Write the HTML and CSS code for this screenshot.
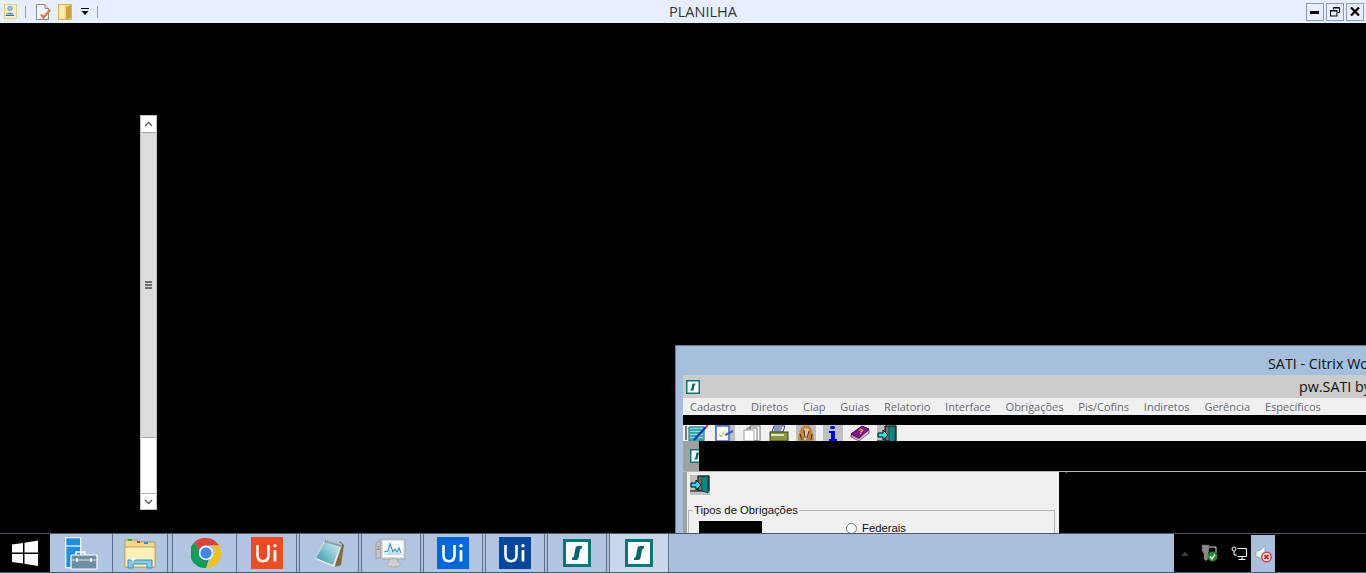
FILE: index.html
```html
<!DOCTYPE html>
<html lang="pt-BR">

<head>
  <meta charset="UTF-8" />
  <meta name="viewport" content="width=device-width, initial-scale=1" />
  <title>PLANILHA</title>
  <link rel="stylesheet" href="styles.css">
</head>

<body>
  <svg class="defs" width="0" height="0">
    <defs>
      <linearGradient id="pad-fill" x1="0" y1="1" x2="1" y2="0">
        <stop offset="0" stop-color="#2f93ad" />
        <stop offset="1" stop-color="#d8f2f4" />
      </linearGradient>
    </defs>
    <symbol id="app-s" viewBox="0 0 28 28">
      <rect x="1.500" y="1.500" width="25" height="25" fill="#fff" stroke="#00787a" stroke-width="3" />
      <path d="M19 7h-4c-1.500 0-2.200.8-2.500 2l-1.500 8c-.2 1-.6 1.500-2 1.800v2.200h4c1.500 0 2.200-.8 2.500-2l1.500-8c.2-1 .6-1.500 2-1.800z" fill="#00686a" />
    </symbol>
    <symbol id="exit-door" viewBox="0 0 20 20">
      <rect width="20" height="20" fill="#c0c0c0" />
      <path d="M8 1h11v15h-11z" fill="#6d6d6d" stroke="#000" />
      <path d="M12 2l6-1v17l-6-2z" fill="#008a8a" stroke="#003c3c" stroke-width=".7" />
      <path d="M1 8h5v-3l5 5-5 5v-3h-5z" fill="#19e6f0" stroke="#000" />
      <path d="M0 16h8" stroke="#000" />
    </symbol>
    <symbol id="ui-mark" viewBox="0 0 32 32">
      <path d="M6.500 8v10c0 4 2.200 6.200 5.500 6.200s5.500-2.200 5.500-6.200v-10" fill="none" stroke="#fff" stroke-width="2.600" />
      <path d="M24 13v11.500" stroke="#fff" stroke-width="2.800" />
      <circle cx="24" cy="8.800" r="1.700" fill="#fff" />
    </symbol>
  </svg>

  <div class="screen">
    <header class="topbar">
      <div class="quick">
        <svg class="quick-user" width="13" height="15" viewBox="0 0 13 15">
          <rect x=".5" y=".5" width="12" height="14" fill="#f7efc0" stroke="#e6cf80" />
          <circle cx="6" cy="4.500" r="2.300" fill="#8fc0ee" stroke="#4b8fd8" stroke-width=".6" />
          <path d="M2 10.500c.5-2.500 7-2.500 8 0z" fill="#4b8fd8" />
          <path d="M2 11.500h8" stroke="#2f6fc0" />
        </svg>
        <span class="quick-sep"></span>
        <svg class="quick-doc" width="15" height="16" viewBox="0 0 15 16">
          <path d="M.5.500h8.500l3.500 4v11h-12z" fill="#f4f4f4" stroke="#8d8d8d" />
          <path d="M9 .5v4h3.500" fill="#ddd" stroke="#8d8d8d" />
          <path d="M5 10.500l2.500 3 6.500-7.500" fill="none" stroke="#e8714e" stroke-width="2.400" />
        </svg>
        <svg class="quick-folder" width="14" height="16" viewBox="0 0 14 16">
          <rect x=".5" y=".5" width="13" height="15" fill="#f5d77c" stroke="#dfb04c" />
          <path d="M8 3l5-2v13l-5 1.500z" fill="#c9a247" />
          <path d="M1.500 1.500h5v13h-5z" fill="#fbeeb6" />
        </svg>
        <svg class="quick-more" width="8" height="7" viewBox="0 0 8 7">
          <path d="M0 .5h8" stroke="#000" />
          <path d="M.5 3h7l-3.500 4z" fill="#000" />
        </svg>
        <span class="quick-sep quick-sep-end"></span>
      </div>
      <div class="topbar-title">PLANILHA</div>
      <div class="winbtns">
        <button class="winbtn" type="button">
          <svg width="10" height="4" viewBox="0 0 10 4"><rect y="1" width="9" height="3" fill="#000" /></svg>
        </button>
        <button class="winbtn" type="button">
          <svg width="10" height="10" viewBox="0 0 10 10" fill="none" stroke="#000"><path d="M3.500 2.500v-2h6v5h-2" /><rect x=".5" y="3.500" width="6.500" height="5.500" /><path d="M1 4h6M4 1h5" /></svg>
        </button>
        <button class="winbtn" type="button">
          <svg width="10" height="9" viewBox="0 0 10 9"><path d="M1 .5l8 8M9 .5l-8 8" stroke="#000" stroke-width="2.200" /></svg>
        </button>
      </div>
    </header>

    <main class="desktop">
      <div class="scrollbar">
        <div class="scroll-btn">
          <svg width="9" height="6" viewBox="0 0 9 6"><path d="M1 5l3.500-3.500 3.500 3.500" fill="none" stroke="#5a5a5a" stroke-width="1.300" /></svg>
        </div>
        <div class="scroll-thumb">
          <span class="grip"></span>
          <span class="grip"></span>
          <span class="grip"></span>
        </div>
        <div class="scroll-track"></div>
        <div class="scroll-btn scroll-btn-down">
          <svg width="9" height="6" viewBox="0 0 9 6"><path d="M1 1l3.500 3.500 3.500-3.500" fill="none" stroke="#5a5a5a" stroke-width="1.300" /></svg>
        </div>
      </div>

      <section class="citrix">
        <div class="citrix-title">SATI - Citrix Workspace</div>
        <div class="app">
          <div class="app-head">
            <svg class="app-icon"><use href="#app-s" /></svg>
            <span class="app-name">pw.SATI by</span>
          </div>
          <nav class="menu">
            <span>Cadastro</span>
            <span>Diretos</span>
            <span>Ciap</span>
            <span>Guias</span>
            <span>Relatorio</span>
            <span>Interface</span>
            <span>Obrigações</span>
            <span>Pis/Cofins</span>
            <span>Indiretos</span>
            <span>Gerência</span>
            <span>Específicos</span>
          </nav>
          <div class="redact-bar"></div>
          <div class="tools">
            <svg class="tool tool-first" viewBox="0 0 23 16">
              <path d="M0 0h23v16h-23z" fill="#f0f0f0" />
              <path d="M4 2h15v14h-15z" fill="#7fe6ee" stroke="#005f66" />
              <path d="M5 5h13M5 8h13M5 11h13M5 14h13" stroke="#005f66" />
              <path d="M9 15l12-13" stroke="#1730b0" stroke-width="2" />
              <path d="M21 2l2-2" stroke="#f03030" stroke-width="2" />
              <path d="M1 15v-14" stroke="#000" />
            </svg>
            <svg class="tool" viewBox="0 0 20 16">
              <rect width="20" height="16" fill="#c0c0c0" />
              <rect x="1" y="1" width="13" height="15" fill="#fff" stroke="#3a66c0" stroke-width="1.500" />
              <path d="M4 9l2 3 4-6" fill="none" stroke="#c9a030" />
              <path d="M10 10l8-4" stroke="#3a66c0" stroke-width="2" />
            </svg>
            <svg class="tool" viewBox="0 0 20 16">
              <rect width="20" height="16" fill="#f0f0f0" />
              <path d="M8 1h10v15h-10zM5 3h10v13h-10z" fill="#fff" stroke="#333" stroke-width=".7" />
              <path d="M2 5h10v11h-10z" fill="#fff" stroke="#777" stroke-width=".7" />
            </svg>
            <svg class="tool" viewBox="0 0 20 16">
              <rect width="20" height="16" fill="#f0f0f0" />
              <path d="M5 1h11l-2 6h-11z" fill="#e8f0ff" stroke="#2a3f8c" />
              <path d="M5 3h8M5 5h7" stroke="#2a3f8c" />
              <rect x="1" y="7" width="18" height="9" fill="#8c9440" stroke="#3f4510" />
              <path d="M2 10h13" stroke="#d7f0b0" stroke-width="2" />
            </svg>
            <svg class="tool" viewBox="0 0 20 16">
              <rect width="20" height="16" fill="#c0c0c0" />
              <path d="M10 0c5 0 7 5 8 16h-16c1-11 3-16 8-16z" fill="#b98a45" />
              <path d="M8 4c2-1 4-1 5 1l-1 7-4 4z" fill="#e7c78f" />
              <path d="M8 5l1 8M13 6l-2 7M4 9l2 6M16 9l-1 6" stroke="#4c2f12" />
            </svg>
            <svg class="tool" viewBox="0 0 20 16">
              <rect width="20" height="16" fill="#c0c0c0" />
              <rect x="7" y="1" width="5" height="3" rx="1.500" fill="#0000f0" />
              <path d="M6 6h6v8h2v2h-8v-2h2v-6h-2z" fill="#0000f0" />
            </svg>
            <svg class="tool" viewBox="0 0 20 16">
              <rect width="20" height="16" fill="#f0f0f0" />
              <path d="M1 9l11-8 7 3-10 9z" fill="#8a0f92" stroke="#4a0050" />
              <path d="M1 10l8 4 10-9v3l-10 8-8-4z" fill="#d8d8d8" stroke="#4a0050" stroke-width=".6" />
              <text class="tool-mark" x="8.500" y="9">?</text>
            </svg>
            <svg class="tool" viewBox="0 0 20 16"><use href="#exit-door" width="20" height="20" /></svg>
          </div>
          <div class="child-head">
            <svg class="child-icon"><use href="#app-s" /></svg>
            <div class="child-redact"></div>
          </div>
          <div class="child-row">
            <div class="child">
              <svg class="child-exit"><use href="#exit-door" /></svg>
              <fieldset class="group">
                <legend>Tipos de Obrigações</legend>
                <div class="group-row">
                  <div class="group-redact"></div>
                  <label class="radio-label"><span class="radio"></span>Federais</label>
                </div>
              </fieldset>
            </div>
            <span class="child-tick"></span>
          </div>
        </div>
      </section>
    </main>

    <footer class="taskbar">
      <div class="start">
        <svg width="26" height="26" viewBox="0 0 26 26">
          <path d="M0 4.500l11-1.500v9.500h-11zM12.500 2.800l13.500-2.300v12h-13.500zM0 14h11v9.500l-11-1.500zM12.500 14h13.500v12l-13.500-2.300z" fill="#fff" />
        </svg>
      </div>
      <div class="task task-tools">
        <svg width="33" height="33" viewBox="0 0 33 33">
          <rect x=".7" y=".7" width="15" height="30" fill="#1f8fe0" stroke="#fff" stroke-width="1.200" />
          <path d="M1 9h15" stroke="#fff" stroke-width="1.200" />
          <path d="M11 18v-3h9v3" fill="none" stroke="#fff" stroke-width="1.500" />
          <rect x="6" y="18" width="26" height="14" rx="1" fill="#6f8da5" stroke="#fff" stroke-width="1.200" />
          <path d="M6 23h26" stroke="#dfe8ef" />
          <path d="M12 21v4M26 21v4" stroke="#fff" stroke-width="1.500" />
        </svg>
      </div>
      <div class="task task-files">
        <svg width="32" height="32" viewBox="0 0 32 32">
          <path d="M1 3h12l2 2h16v25h-30z" fill="#f1d88e" stroke="#b89a55" />
          <rect x="4" y="2" width="4" height="2" fill="#2fae3a" />
          <rect x="13" y="4" width="3" height="2" fill="#d8402f" />
          <rect x="20" y="5" width="4" height="2" fill="#2f8fd8" />
          <path d="M1 10h30v20h-30z" fill="#fbeeb6" stroke="#c9a960" />
          <path d="M4 23h24v8h-5v-4h-14v4h-5z" fill="#7fcdf0" stroke="#3a8fc0" />
          <path d="M8 21l1-2 1 2 2 1-2 1-1 2-1-2-2-1z" fill="#fff" />
        </svg>
      </div>
      <div class="task task-chrome">
        <svg width="30" height="30" viewBox="0 0 30 30">
          <path d="M15 0a15 15 0 0 1 13 7.500h-13a7.500 7.500 0 0 0-7 4.800l-4.600-8a15 15 0 0 1 11.600-4.300z" fill="#db4437" />
          <path d="M28 7.500a15 15 0 0 1-13 22.500l6.500-11.200a7.500 7.500 0 0 0-.4-11.300z" fill="#f4c20d" />
          <path d="M15 30a15 15 0 0 1-11.600-25.700l6.500 11.200a7.500 7.500 0 0 0 8.300 4.400z" fill="#0f9d58" />
          <circle cx="15" cy="15" r="7.200" fill="#fff" />
          <circle cx="15" cy="15" r="5.700" fill="#4285f4" />
        </svg>
      </div>
      <div class="task task-orange">
        <svg class="ui-logo ui-orange"><use href="#ui-mark" /></svg>
      </div>
      <div class="task">
        <svg width="32" height="30" viewBox="0 0 32 30">
          <path d="M27 3l4 4-3 20-6 2z" fill="#8a6a3c" />
          <path d="M12 1l17 5-8 23-19-8z" fill="#f4f4f4" stroke="#c8c8c8" stroke-width=".6" />
          <path d="M12 3l15 5-7 19-17-7z" fill="url(#pad-fill)" />
          <path d="M12 1l17 5-1 3-17-5z" fill="#8fa0a8" />
          <path d="M13 2l15 4.500" stroke="#e8eef0" stroke-dasharray="1 1" />
        </svg>
      </div>
      <div class="task">
        <svg width="32" height="30" viewBox="0 0 32 30">
          <path d="M1 5l5-3v17l-5 2z" fill="#c4c4c4" stroke="#8a8a8a" stroke-width=".6" />
          <path d="M2.500 8.500h2" stroke="#48b048" />
          <path d="M2.500 11h2" stroke="#555" />
          <path d="M6 1h24v20h-24z" fill="#dcdcdc" stroke="#a8a8a8" />
          <rect x="8" y="3" width="20" height="16" fill="#f7fbfd" />
          <path d="M9 14l4-1 2-7 3 8 2-3 2 3 2-4 2 5" fill="none" stroke="#3f94c8" stroke-width="1.200" />
          <path d="M9 17l4-3 2-2 3 3 2-2 2 2 2-2 3 4z" fill="#bfe0f0" />
          <path d="M14 21h8l1 3c4 1 3 5-4 5s-9-3-5-5z" fill="#cfcfcf" stroke="#9a9a9a" stroke-width=".6" />
        </svg>
      </div>
      <div class="task">
        <svg class="ui-logo ui-blue"><use href="#ui-mark" /></svg>
      </div>
      <div class="task">
        <svg class="ui-logo ui-navy"><use href="#ui-mark" /></svg>
      </div>
      <div class="task">
        <svg class="sati-logo"><use href="#app-s" /></svg>
      </div>
      <div class="task task-active">
        <svg class="sati-logo"><use href="#app-s" /></svg>
      </div>
      <div class="task-fill"></div>
      <div class="tray">
        <svg class="tray-chevron" width="8" height="5" viewBox="0 0 8 5"><path d="M0 5l4-4.500 4 4.500z" fill="#3c3c3c" /></svg>
        <svg class="tray-shield" width="17" height="18" viewBox="0 0 17 18">
          <path d="M1 1h7v6l-1 3v5l-2 2-2-2v-5l-2-3z" fill="#8a8a8a" stroke="#555" stroke-width=".5" />
          <path d="M8 3h7v6" fill="none" stroke="#ddd" />
          <circle cx="11.500" cy="12.500" r="5" fill="#1f8a2c" />
          <path d="M9 12.500l2 2.500 3-4.500" fill="none" stroke="#fff" stroke-width="1.400" />
        </svg>
        <svg class="tray-net" width="16" height="15" viewBox="0 0 16 15" fill="none" stroke="#fff">
          <circle cx="3" cy="3" r="2" />
          <path d="M3 5v4M3 9h3" />
          <path d="M6.500 2.500h9v8h-9M11 10.500v3M7.500 13.500h7" />
        </svg>
        <div class="tray-sound">
          <svg width="17" height="18" viewBox="0 0 17 18">
            <path d="M1 6h3l6-5v16l-6-5h-3z" fill="#f2f2f2" stroke="#8a8a8a" stroke-width=".6" />
            <circle cx="11.500" cy="12" r="4.700" fill="#fff" stroke="#e0404a" stroke-width="1.600" />
            <path d="M9.500 10l4 4M13.500 10l-4 4" stroke="#d8202a" stroke-width="1.900" />
          </svg>
        </div>
      </div>
    </footer>
  </div>
</body>

</html>
```

FILE: styles.css
```css
* {
  box-sizing: border-box;
}

body {
  margin: 0;
  font-family: 'Open Sans', sans-serif;
  background-color: #000;
  overflow: hidden;
}

.defs {
  position: absolute;
}

.screen {
  display: flex;
  flex-direction: column;
  height: 573px;
}

/* top bar */

.topbar {
  display: flex;
  align-items: center;
  height: 23px;
  background-color: #e6eeff;
  flex-shrink: 0;
}

.quick {
  display: flex;
  align-items: center;
  width: 100px;
  padding-left: 4px;
}

.quick-sep {
  width: 1px;
  height: 12px;
  margin-left: 8px;
  background-color: #9aa3b5;
}

.quick-doc {
  margin-left: 10px;
}

.quick-folder {
  margin-left: 7px;
}

.quick-more {
  margin-left: 9px;
}

.topbar-title {
  flex: 1;
  text-align: center;
  font-size: 14.500px;
  color: #333;
}

.winbtns {
  display: flex;
  gap: 2px;
  width: 60px;
}

.winbtn {
  display: flex;
  align-items: center;
  justify-content: center;
  width: 18px;
  height: 18px;
  padding: 0;
  background-color: #e6eeff;
  border: 1px solid #8a9bbd;
}

/* desktop */

.desktop {
  position: relative;
  flex: 1;
  overflow: hidden;
  background-color: #000;
}

.scrollbar {
  position: absolute;
  left: 140px;
  top: 92px;
  display: flex;
  flex-direction: column;
  width: 17px;
  height: 395px;
  background-color: #fff;
  border-left: 1px solid #c4c4c4;
  border-right: 1px solid #c4c4c4;
}

.scroll-btn {
  display: flex;
  align-items: center;
  justify-content: center;
  height: 17px;
  border-top: 1px solid #c4c4c4;
}

.scroll-btn-down {
  border-top: 1px solid #b0b0b0;
  border-bottom: 1px solid #c4c4c4;
}

.scroll-thumb {
  display: flex;
  flex-direction: column;
  align-items: center;
  justify-content: center;
  gap: 1px;
  height: 306px;
  background-color: #dcdcdc;
  border-top: 1px solid #a8a8a8;
  border-bottom: 1px solid #a8a8a8;
}

.grip {
  width: 7px;
  height: 2px;
  background-color: #6e6e6e;
}

.scroll-track {
  flex: 1;
}

/* citrix window */

.citrix {
  position: absolute;
  left: 675px;
  top: 322px;
  width: 800px;
  height: 190px;
  background-color: #a6bfdc;
  border-top: 1px solid #6d7b8c;
  border-left: 1px solid #6d7b8c;
}

.citrix-title {
  height: 29px;
  padding-left: 592px;
  font-size: 14.300px;
  line-height: 35px;
  color: #111;
  white-space: nowrap;
}

.app {
  margin-left: 7px;
  background-color: #f0f0f0;
}

.app-head {
  display: flex;
  align-items: center;
  height: 23px;
  padding-left: 3px;
  background-color: #cccccc;
}

.app-icon {
  width: 14px;
  height: 14px;
}

.app-name {
  margin-left: 599px;
  font-size: 14.300px;
  color: #111;
  white-space: nowrap;
}

.menu {
  display: flex;
  gap: 14.800px;
  align-items: center;
  height: 17px;
  padding-left: 7px;
  font-size: 11px;
  color: #6a6a78;
  white-space: nowrap;
}

.redact-bar {
  height: 10px;
  background-color: #000;
}

.tools {
  display: flex;
  gap: 7px;
  height: 16px;
  padding-left: 2px;
  overflow: hidden;
}

.tool {
  width: 20px;
  height: 16px;
  flex-shrink: 0;
}

.tool-first {
  width: 23px;
}

.tool-mark {
  font-family: 'Liberation Sans', sans-serif;
  font-size: 8px;
  font-weight: bold;
  fill: #ffe600;
}

.child-head {
  display: flex;
  align-items: center;
  height: 31px;
  padding-left: 7px;
  background-color: #a0a0a0;
  border-bottom: 1px solid #b8b8b8;
}

.child-icon {
  width: 14px;
  height: 14px;
  flex-shrink: 0;
}

.child-redact {
  flex: 1;
  height: 30px;
  margin-left: -5px;
  background-color: #000;
}

.child-row {
  display: flex;
  height: 61px;
  padding-left: 4px;
  background-color: #000;
  background-image: linear-gradient(#a0a0a0, #a0a0a0);
  background-size: 4px 100%;
  background-repeat: no-repeat;
}

.child {
  width: 372px;
  padding: 3px 4px 0 1px;
  background-color: #f0f0f0;
}

.child-tick {
  width: 1px;
  height: 1px;
  margin-left: 7px;
  background-color: #777;
}

.child-exit {
  display: block;
  width: 20px;
  height: 20px;
  margin-left: 2px;
}

.group {
  height: 41px;
  margin: 9px 0 0;
  padding: 0 0 0 10px;
  border: 1px solid #b4b4b4;
  min-width: 0;
}

.group legend {
  padding: 0 1px;
  margin-left: -6px;
  font-family: 'Liberation Sans', sans-serif;
  font-size: 11.300px;
  line-height: 13px;
  color: #111;
}

.group-row {
  display: flex;
  align-items: flex-start;
  margin-top: 4px;
}

.group-redact {
  width: 63px;
  height: 14px;
  background-color: #000;
}

.radio-label {
  display: flex;
  align-items: center;
  gap: 5px;
  margin-left: 84px;
  font-family: 'Liberation Sans', sans-serif;
  font-size: 11.300px;
  line-height: 14px;
  color: #111;
}

.radio {
  width: 11px;
  height: 11px;
  background-color: #fff;
  border: 1px solid #777;
  border-radius: 50%;
}

/* taskbar */

.taskbar {
  display: flex;
  gap: 2px;
  height: 40px;
  flex-shrink: 0;
  background-color: #a9c0dc;
  border-top: 1px solid #4f5a68;
  border-bottom: 1px solid #4f5a68;
}

.start {
  display: flex;
  align-items: center;
  justify-content: center;
  width: 50px;
  margin-right: -2px;
  background-color: #000;
}

.task {
  display: flex;
  align-items: center;
  justify-content: center;
  width: 60px;
  flex-shrink: 0;
  background-color: #b0c5df;
  border-left: 1px solid #5c7089;
  border-right: 1px solid #5c7089;
}

.task-tools {
  width: 63px;
  margin-right: -2px;
  border-left: 0;
}

.task-files {
  width: 55px;
  margin-right: 2px;
  border-left: 0;
}

.task-chrome {
  width: 65px;
  margin-right: -2px;
  padding-left: 2px;
}

.task-orange {
  border-left: 0;
}

.task-active {
  background-color: #c8d7ea;
}

.task-fill {
  flex: 1;
}

.ui-logo {
  width: 32px;
  height: 32px;
}

.ui-orange {
  background-color: #f04a23;
}

.ui-blue {
  background-color: #0067df;
}

.ui-navy {
  background-color: #00479d;
}

.sati-logo {
  width: 28px;
  height: 28px;
}

.tray {
  display: flex;
  align-items: center;
  width: 192px;
  margin-left: -2px;
  padding-left: 7px;
  background-color: #000;
}

.tray-shield {
  margin-left: 12px;
}

.tray-net {
  margin-left: 13px;
}

.tray-sound {
  display: flex;
  align-items: center;
  justify-content: center;
  width: 24px;
  height: 37px;
  margin-left: 4px;
  margin-top: 1px;
  background-color: #a9c0dc;
}
```
